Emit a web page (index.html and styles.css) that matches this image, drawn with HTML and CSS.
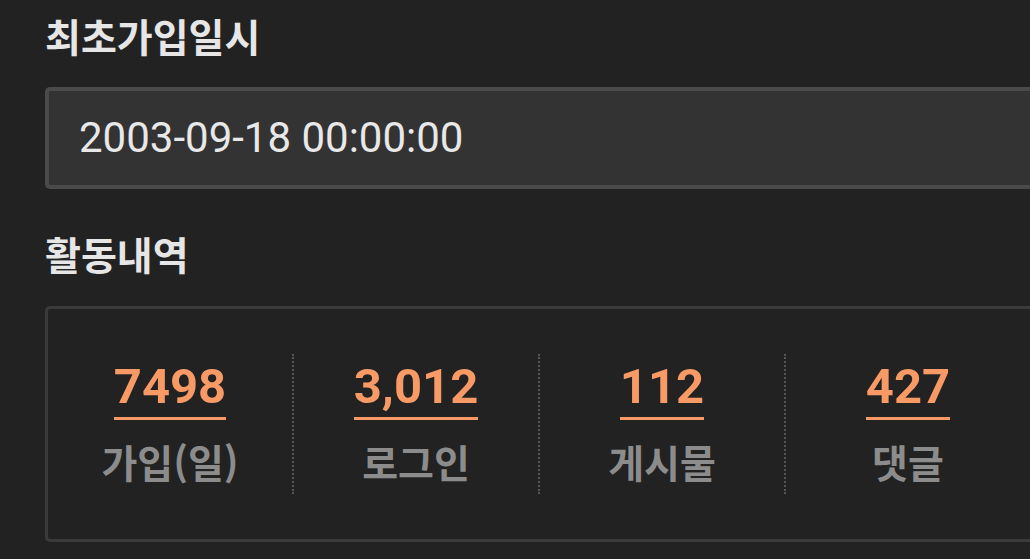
FILE: index.html
```html
<!DOCTYPE html>
<html lang="ko">
<head>
    <meta charset="utf-8">
    <title>회원정보</title>
    <link rel="stylesheet" href="styles.css">
</head>
<body>

<section class="profile">

    <h2 class="field-label">최초가입일시</h2>
    <div class="field-box">2003-09-18 00:00:00</div>

    <h2 class="field-label section-gap">활동내역</h2>
    <div class="stats">
        <div class="stat">
            <span class="stat-num">7498</span>
            <span class="stat-name">가입(일)</span>
        </div>
        <div class="stat">
            <span class="stat-num">3,012</span>
            <span class="stat-name">로그인</span>
        </div>
        <div class="stat">
            <span class="stat-num">112</span>
            <span class="stat-name">게시물</span>
        </div>
        <div class="stat">
            <span class="stat-num">427</span>
            <span class="stat-name">댓글</span>
        </div>
    </div>

</section>

</body>
</html>
```

FILE: styles.css
```css
html, body {
    margin: 0;
    padding: 0;
    background-color: #222222;
    overflow: hidden;
}

body {
    font-family: "Noto Sans CJK KR", "Noto Sans", Roboto, sans-serif;
}

.profile {
    padding: 12px 0 0 45px;
}

.field-label {
    margin: 0;
    font-size: 39px;
    font-weight: 700;
    line-height: 46px;
    color: #e6e6e6;
}

.section-gap {
    margin-top: 41px;
}

.field-box {
    margin-top: 29px;
    width: 1010px;
    height: 94px;
    padding-left: 30px;
    background-color: #333333;
    border: 4px solid #4a4a4a;
    border-right: none;
    border-radius: 5px 0 0 5px;
    font-family: Roboto, "Noto Sans CJK KR", sans-serif;
    font-size: 42px;
    line-height: 94px;
    color: #e8e8e8;
}

.stats {
    margin-top: 30px;
    width: 984px;
    padding: 45px 0;
    display: grid;
    grid-template-columns: 244px repeat(3, 246px);
    border: 3px solid #3a3a3a;
    border-right: none;
    border-radius: 5px 0 0 5px;
}

.stat {
    height: 140px;
    display: flex;
    flex-direction: column;
    align-items: center;
}

.stat + .stat {
    border-left: 2px dotted #545454;
}

.stat-num {
    margin-top: 8px;
    padding-bottom: 6px;
    border-bottom: 3px solid #f79a66;
    font-family: Roboto, sans-serif;
    font-size: 49px;
    font-weight: 700;
    line-height: 49px;
    color: #f79a66;
}

.stat-name {
    margin-top: 18px;
    font-size: 39px;
    font-weight: 700;
    line-height: 46px;
    color: #8c8c8c;
}
```
